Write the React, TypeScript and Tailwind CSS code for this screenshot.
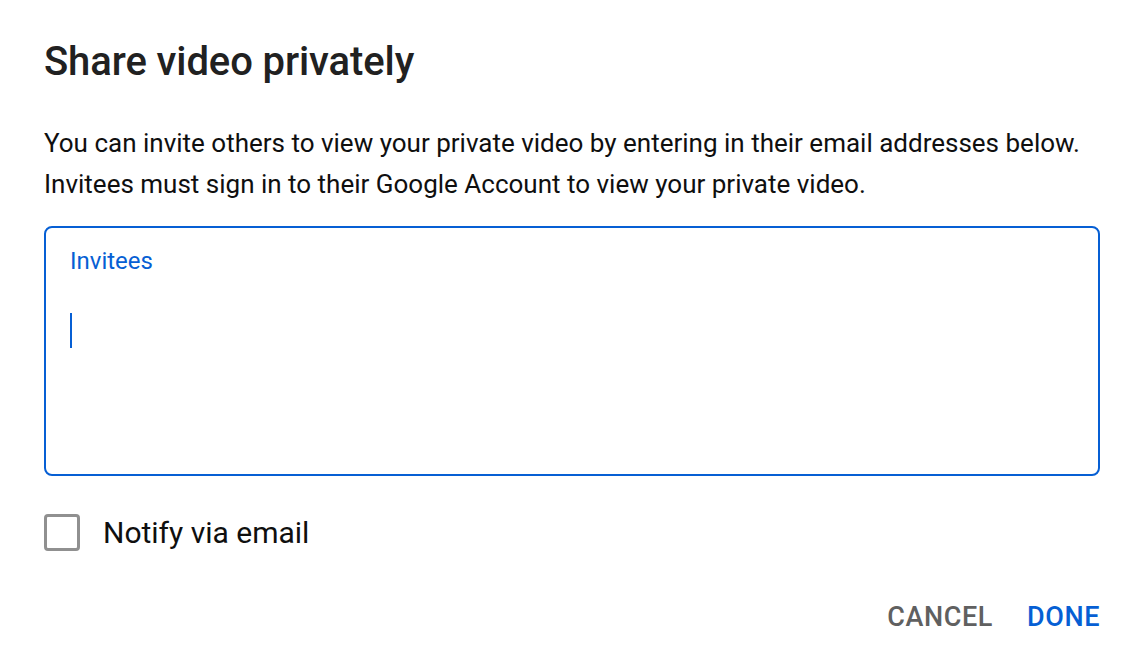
export default function App() {
  return (
    <div className="w-[1134px] h-[654px] bg-white flex flex-col pl-[44px] pr-[34px] pt-[36px] font-['Roboto',sans-serif] text-[#0f0f0f]">
      <h1 className="text-[40px] leading-[52px] font-medium text-[#212121] tracking-[-0.1px]">Share video privately</h1>

      <p className="mt-[35px] text-[26px] leading-[41px] text-[#0f0f0f] whitespace-nowrap">
        You can invite others to view your private video by entering in their email addresses below.
        <br />
        Invitees must sign in to their Google Account to view your private video.
      </p>

      <div className="mt-[21px] h-[250px] rounded-[8px] border-2 border-[#065fd4] px-[24px] pt-[19px] flex flex-col">
        <span className="text-[24px] leading-[28px] text-[#065fd4]">Invitees</span>
        <div className="mt-[38px] w-[2px] h-[35px] bg-[#065fd4]" />
      </div>

      <div className="mt-[38px] flex items-center gap-[23px]">
        <div className="w-[36px] h-[37px] rounded-[4px] border-[3px] border-[#909090]" />
        <span className="text-[30px] leading-[36px] text-[#0f0f0f]">Notify via email</span>
      </div>

      <div className="mt-[48px] flex justify-end gap-[34px] text-[27px] leading-[36px] font-medium tracking-[0.6px]">
        <button className="text-[#606060]">CANCEL</button>
        <button className="text-[#065fd4]">DONE</button>
      </div>
    </div>
  );
}
